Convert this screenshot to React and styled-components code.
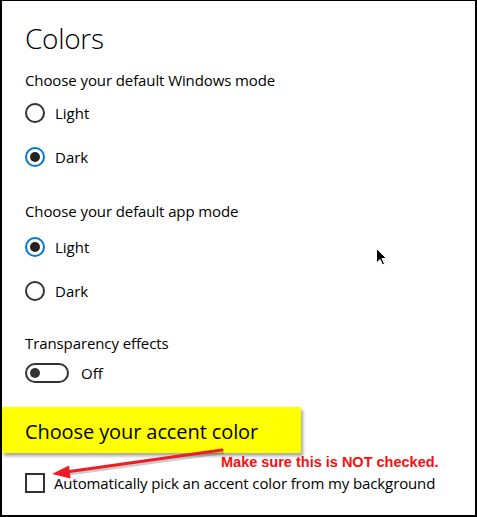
import React from 'react'
import styled, { createGlobalStyle } from 'styled-components'

const GlobalStyle = createGlobalStyle`
  html, body {
    margin: 0;
    padding: 0;
    background: #fff;
  }
  body {
    font-family: "Open Sans", "Noto Sans", sans-serif;
    color: #000;
  }
`

const Frame = styled.div`
  position: relative;
  width: 477px;
  height: 517px;
  box-sizing: border-box;
  padding: 20px 0 0 25px;
  background: #fff;
  box-shadow: inset 2px 1px 0 #000, inset -2px -2px 0 #000;
  overflow: hidden;
`

const Title = styled.h1`
  margin: 0;
  font-size: 28px;
  font-weight: 300;
  line-height: 36px;
  letter-spacing: -0.3px;
`

const Label = styled.div`
  margin-top: ${p => p.$gap}px;
  font-size: 15px;
  line-height: 20px;
  letter-spacing: -0.1px;
`

const Group = styled.div`
  margin-top: ${p => p.$gap}px;
  display: flex;
  flex-direction: column;
`

const RadioRow = styled.div`
  height: 44px;
  display: flex;
  align-items: center;
  gap: 10px;
  font-size: 15px;
`

const RadioCircle = styled.span`
  width: 20px;
  height: 20px;
  box-sizing: border-box;
  border-radius: 50%;
  border: 2px solid ${p => (p.$checked ? '#0078d7' : '#333')};
  display: flex;
  align-items: center;
  justify-content: center;
  &::after {
    content: '';
    display: ${p => (p.$checked ? 'block' : 'none')};
    width: 10px;
    height: 10px;
    border-radius: 50%;
    background: #222;
  }
`

const ToggleRow = styled.div`
  margin-top: 10px;
  height: 20px;
  display: flex;
  align-items: center;
  gap: 12px;
  font-size: 15px;
`

const Switch = styled.span`
  width: 44px;
  height: 20px;
  box-sizing: border-box;
  border: 2px solid #333;
  border-radius: 10px;
  display: flex;
  align-items: center;
  padding-left: 3px;
  &::after {
    content: '';
    width: 10px;
    height: 10px;
    border-radius: 50%;
    background: #333;
  }
`

const Highlight = styled.div`
  margin: 24px 0 0 -23px;
  width: 299px;
  height: 46px;
  box-sizing: border-box;
  padding: 2px 0 0 23px;
  display: flex;
  align-items: center;
  background: #ffff00;
  box-shadow: 2px 3px 3px rgba(0, 0, 0, 0.35);
  font-size: 20px;
  letter-spacing: -0.1px;
`

const CheckRow = styled.div`
  margin-top: 20px;
  height: 20px;
  display: flex;
  align-items: center;
  gap: 9px;
  font-size: 15px;
  letter-spacing: -0.12px;
`

const CheckBox = styled.span`
  width: 20px;
  height: 20px;
  box-sizing: border-box;
  border: 2px solid #333;
`

const Note = styled.div`
  position: absolute;
  left: 221px;
  top: 454px;
  font-family: "Liberation Sans", Arial, sans-serif;
  font-weight: bold;
  font-size: 14.5px;
  color: #ff0d0d;
  white-space: nowrap;
`

const Overlay = styled.svg`
  position: absolute;
  left: 0;
  top: 0;
  pointer-events: none;
`

const Cursor = styled.svg`
  position: absolute;
  left: 376px;
  top: 248px;
`

const Radio = ({ checked, children }) => (
  <RadioRow>
    <RadioCircle $checked={checked} />
    {children}
  </RadioRow>
)

export default function App() {
  return (
    <>
      <GlobalStyle />
      <Frame>
        <Title>Colors</Title>

        <Label $gap={14}>Choose your default Windows mode</Label>
        <Group $gap={1}>
          <Radio>Light</Radio>
          <Radio checked>Dark</Radio>
        </Group>

        <Label $gap={22}>Choose your default app mode</Label>
        <Group $gap={4}>
          <Radio checked>Light</Radio>
          <Radio>Dark</Radio>
        </Group>

        <Label $gap={20}>Transparency effects</Label>
        <ToggleRow>
          <Switch />
          Off
        </ToggleRow>

        <Highlight>Choose your accent color</Highlight>

        <CheckRow>
          <CheckBox />
          Automatically pick an accent color from my background
        </CheckRow>

        <Note>Make sure this is NOT checked.</Note>

        <Overlay width="477" height="517" viewBox="0 0 477 517">
          <line x1="223" y1="451" x2="68" y2="472.5" stroke="rgba(0,0,0,0.2)" strokeWidth="3" transform="translate(1 1.5)" />
          <line x1="222" y1="450" x2="66" y2="472" stroke="#ee1c24" strokeWidth="3" strokeLinecap="round" />
          <polygon points="52,474 70.6,478.4 69,465.6" fill="#ee1c24" />
        </Overlay>

        <Cursor width="12" height="18" viewBox="0 0 12 18">
          <path d="M0.5 0.5 L0.5 15 L4 11.5 L6.5 17 L8.5 16 L6 10.5 L10.5 10.5 Z" fill="#000" stroke="#fff" strokeWidth="1" />
        </Cursor>
      </Frame>
    </>
  )
}
